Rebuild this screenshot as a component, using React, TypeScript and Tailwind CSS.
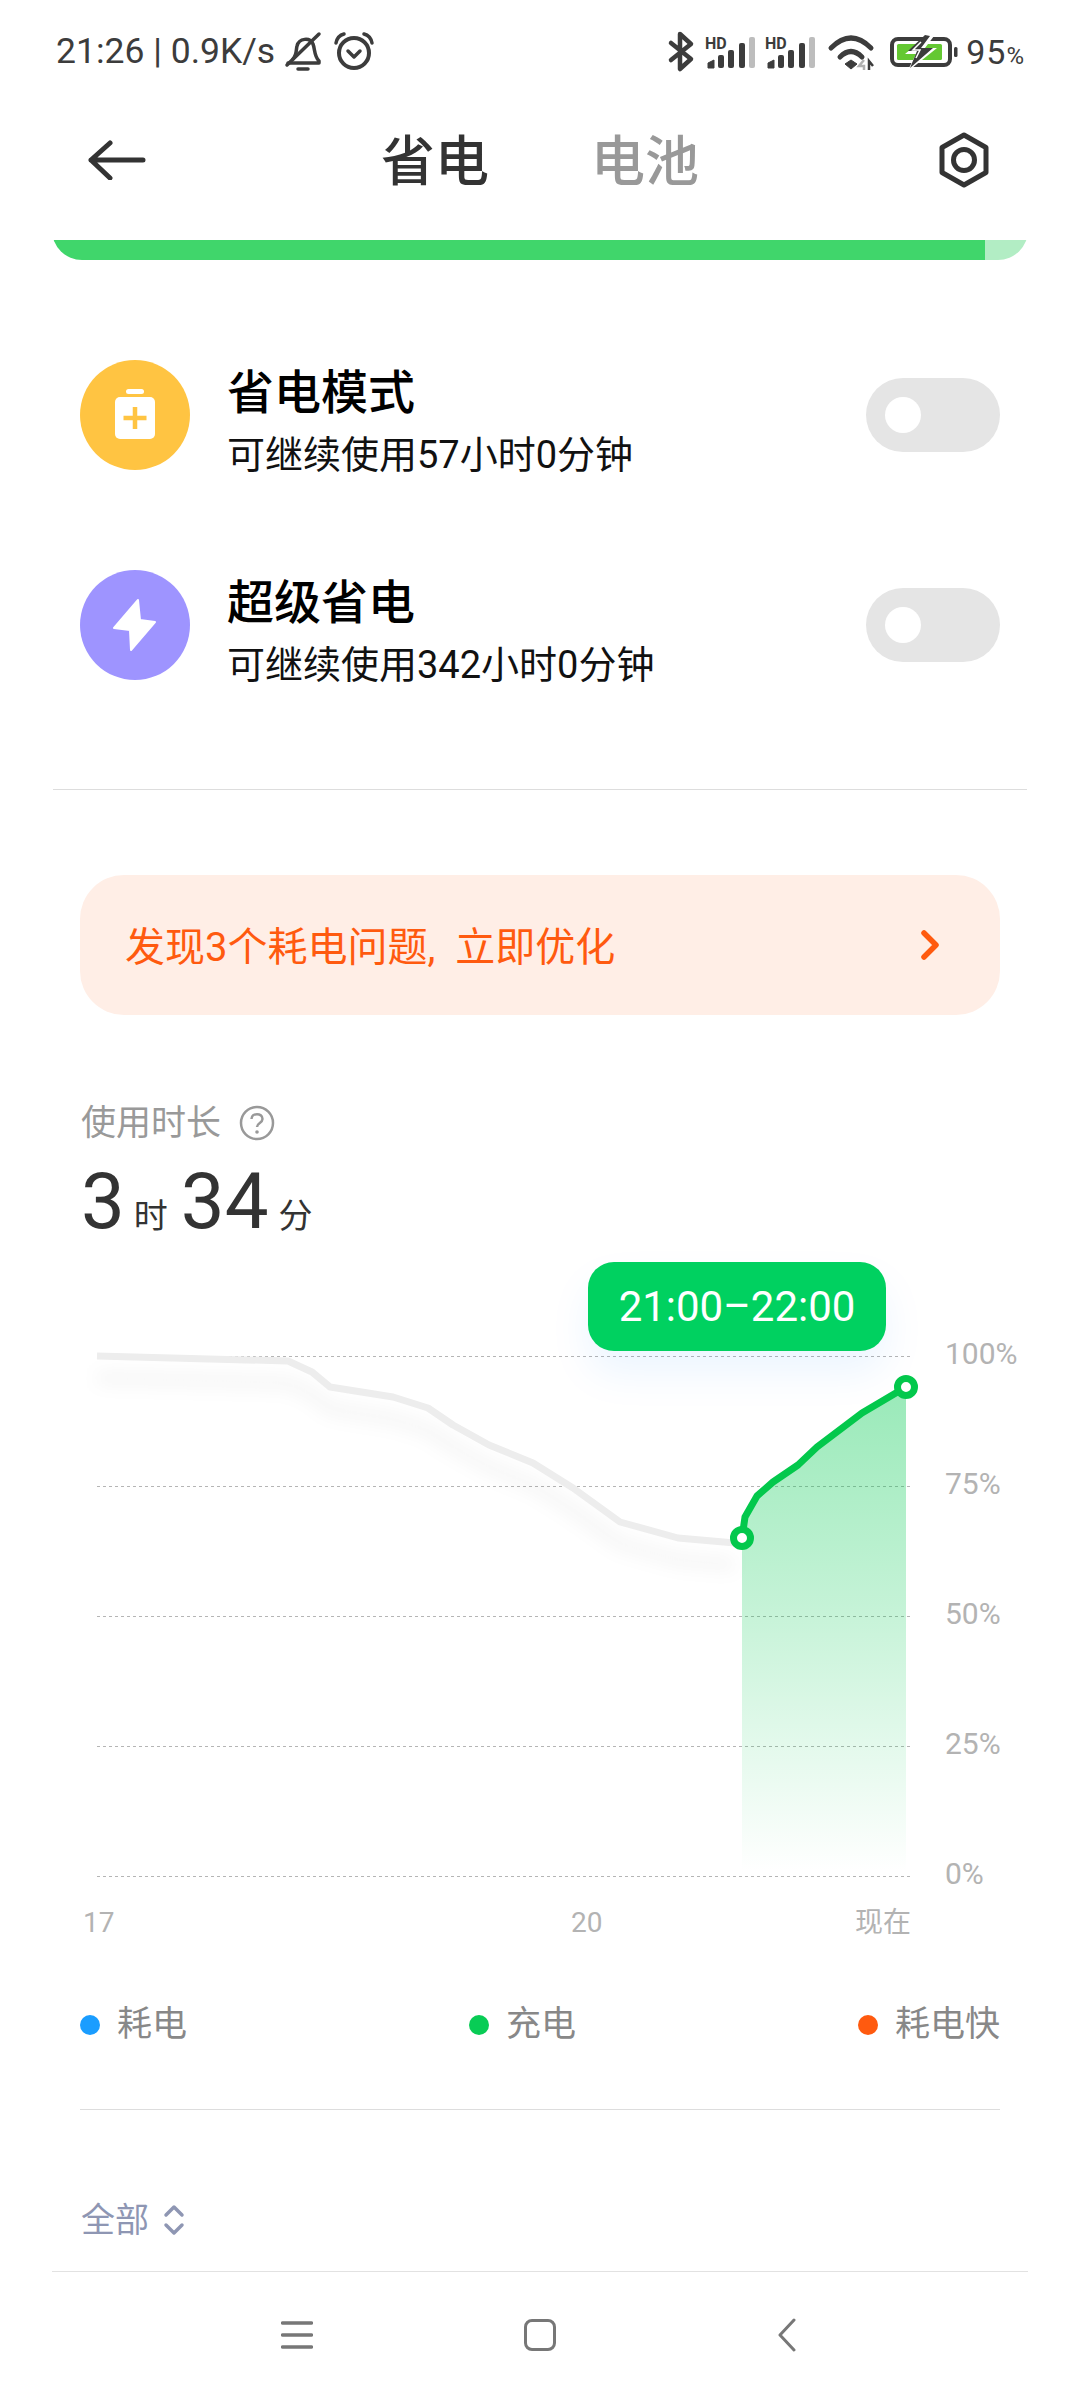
import React from "react";

const gray = "M97 1356 L288 1361 L312 1372 L330 1387 L393 1397 L428 1408 L453 1425 L489 1445 L533 1463 L573 1488 L620 1522 L678 1538 L735 1543";
const green = "M742 1538 L745 1517 L757 1496 L773 1482 L798 1465 L817 1447 L862 1413 L906 1387";

function Signal({ x }: { x: number }) {
  return (
    <g>
      <text x={x - 3} y={48.5} fontSize="16" fontWeight="700" fill="#3c3c3c" fontFamily="Roboto, sans-serif">HD</text>
      <path d={`M${x} 68 L${x} 63 L${x + 6} 60 L${x + 6} 68 Z`} fill="#3c3c3c" stroke="#3c3c3c" strokeWidth="1" strokeLinejoin="round" />
      <rect x={x + 10} y={55} width="6" height="13" rx="2" fill="#3c3c3c" />
      <rect x={x + 20} y={50} width="6" height="18" rx="2" fill="#3c3c3c" />
      <rect x={x + 31} y={43} width="6" height="25" rx="2" fill="#3c3c3c" />
      <rect x={x + 41} y={37} width="6" height="31" rx="2" fill="#bdbdbd" />
    </g>
  );
}

function StatusIcons() {
  return (
    <svg width="300" height="104" viewBox="665 0 300 104" className="shrink-0">
      <path d="M672 43 L692 59 L681 69 L681 34 L692 44 L672 60" fill="none" stroke="#3c3c3c" strokeWidth="4.5" strokeLinejoin="round" strokeLinecap="round" />
      <Signal x={709} />
      <Signal x={769} />
      <path d="M832 48 Q852 28 872 48" fill="none" stroke="#3c3c3c" strokeWidth="5" strokeLinecap="round" />
      <path d="M841 57 Q852 46 863 57" fill="none" stroke="#3c3c3c" strokeWidth="5" strokeLinecap="round" />
      <path d="M846 64 L852 60 L858 64 L852 69 Z" fill="#3c3c3c" stroke="#3c3c3c" strokeWidth="1" />
      <path d="M865 60 L860 66 L865 66 L865 70" fill="none" stroke="#b0b0b0" strokeWidth="2.5" />
      <path d="M870 70 L870 61 L874 66" fill="none" stroke="#3c3c3c" strokeWidth="2.5" />
      <rect x="893" y="39" width="58" height="26" rx="6" fill="none" stroke="#3c3c3c" strokeWidth="4" />
      <rect x="898" y="44" width="45" height="16" rx="1.5" fill="#64c832" />
      <path d="M932 32 L906 54 L917 54 L908 72 L938 48 L926 48 L938 32 Z" fill="#ffffff" />
      <path d="M926 35 L909 51 L918 51 L911 68 L934 48 L922 48 L931 36 Z" fill="#3c3c3c" />
      <path d="M922 42 L914 50 L921 50 L917 58" fill="none" stroke="#ffffff" strokeWidth="1.5" />
      <rect x="955" y="47" width="3.5" height="10" rx="1.5" fill="#3c3c3c" />
    </svg>
  );
}

export default function App() {
  return (
    <div className="w-[1080px] h-[2400px] bg-white overflow-hidden flex flex-col font-['Roboto','Noto_Sans_CJK_SC',sans-serif]">
      {/* status bar */}
      <div className="h-[104px] flex items-center pl-[56px] text-[#3c3c3c]">
        <span className="text-[35.5px] leading-none whitespace-nowrap w-[228px]">21:26 | 0.9K/s</span>
        <svg width="38" height="42" viewBox="283 32 38 42" className="shrink-0">
          <path d="M292 60 C296 56 295 50 296 47 C298 39 309 38 312 45 C314 50 313 57 318 62 L318 64 L287 64" fill="none" stroke="#3c3c3c" strokeWidth="3.5" strokeLinejoin="round" strokeLinecap="round" />
          <path d="M286 66 L318 35" stroke="#3c3c3c" strokeWidth="3.5" strokeLinecap="round" />
          <path d="M297 70 L307 70" stroke="#3c3c3c" strokeWidth="3.5" strokeLinecap="round" />
        </svg>
        <svg width="42" height="42" viewBox="332 32 42 42" className="ml-[11px] shrink-0">
          <circle cx="353" cy="54" r="15" fill="none" stroke="#3c3c3c" strokeWidth="4" />
          <path d="M347 52 L353 58 L359 52" fill="none" stroke="#3c3c3c" strokeWidth="3.5" strokeLinecap="round" strokeLinejoin="round" />
          <path d="M335 44 C336 39 339 36 343 35 M363 35 C367 36 370 39 371 44" fill="none" stroke="#3c3c3c" strokeWidth="3.5" strokeLinecap="round" />
        </svg>
        <div className="ml-auto flex items-center pr-[55px]">
          <StatusIcons />
          <span className="text-[34px] leading-none ml-[2px] tracking-[1px]">95<span className="text-[24px]">%</span></span>
        </div>
      </div>

      {/* header */}
      <div className="h-[112px] flex items-center pl-[88px]">
        <svg width="58" height="40" viewBox="88 140 58 40" className="shrink-0">
          <path d="M143 160 L91 160 M110 143 L91 160 L110 178" fill="none" stroke="#333333" strokeWidth="5" strokeLinecap="round" strokeLinejoin="round" />
        </svg>
        <span className="ml-[235px] mt-[5px] text-[54px] leading-none font-medium text-[#333333]">省电</span>
        <span className="ml-[102px] mt-[5px] text-[54px] leading-none font-medium text-[#999999]">电池</span>
        <svg width="56" height="60" viewBox="937 130 56 60" className="ml-[237px] shrink-0">
          <path d="M965 135 L987 147.5 L987 172.5 L965 185 L943 172.5 L943 147.5 Z" fill="none" stroke="#333333" strokeWidth="5" strokeLinejoin="round" />
          <circle cx="965" cy="160" r="10.5" fill="none" stroke="#333333" strokeWidth="5" />
        </svg>
      </div>

      {/* progress bar, cut at the top */}
      <div className="mt-[24px] mx-[52px] h-[20px] overflow-hidden shrink-0">
        <div className="-mt-[40px] h-[60px] rounded-[40px] overflow-hidden flex">
          <div className="flex-1 bg-[#40d66b]" />
          <div className="w-[43px] bg-[#b2edc4]" />
        </div>
      </div>

      {/* mode rows */}
      <div className="mt-[100px] flex flex-col gap-[100px] px-[80px]">
        <div className="flex items-center h-[110px]">
          <div className="w-[110px] h-[110px] rounded-full bg-[#ffc442] flex items-center justify-center shrink-0">
            <svg width="44" height="54" viewBox="113 389 44 54">
              <rect x="126" y="390" width="18" height="5" rx="2.5" fill="#ffffff" />
              <rect x="115" y="398" width="40" height="42" rx="5" fill="#ffffff" />
              <path d="M123.5 419 L146.5 419 M135 408 L135 430" stroke="#ffc442" strokeWidth="4.5" />
            </svg>
          </div>
          <div className="ml-[37px] mt-[12px] flex-1">
            <div className="text-[47px] leading-[62px] font-medium text-black">省电模式</div>
            <div className="mt-[6px] text-[38px] leading-[50px] text-[#111111]">可继续使用57小时0分钟</div>
          </div>
          <div className="w-[134px] h-[74px] rounded-full bg-[#e5e5e5] flex items-center pl-[19px] shrink-0">
            <div className="w-[36px] h-[36px] rounded-full bg-white" />
          </div>
        </div>
        <div className="flex items-center h-[110px]">
          <div className="w-[110px] h-[110px] rounded-full bg-[#9e94ff] flex items-center justify-center shrink-0">
            <svg width="46" height="56" viewBox="112 597 46 56">
              <path d="M138 600 L114 628 L130 630 L131 650 L155 622 L140 620 Z" fill="#ffffff" stroke="#ffffff" strokeWidth="2" strokeLinejoin="round" />
            </svg>
          </div>
          <div className="ml-[37px] mt-[12px] flex-1">
            <div className="text-[47px] leading-[62px] font-medium text-black">超级省电</div>
            <div className="mt-[6px] text-[38px] leading-[50px] text-[#111111]">可继续使用342小时0分钟</div>
          </div>
          <div className="w-[134px] h-[74px] rounded-full bg-[#e5e5e5] flex items-center pl-[19px] shrink-0">
            <div className="w-[36px] h-[36px] rounded-full bg-white" />
          </div>
        </div>
      </div>

      <div className="mt-[109px] mx-[53px] h-px bg-[#dddddd] shrink-0" />

      {/* banner */}
      <div className="mt-[85px] mx-[80px] h-[140px] rounded-[44px] bg-[#ffeee6] flex items-center pl-[45px] pr-[58px] shrink-0">
        <span className="flex-1 mt-[6px] text-[40px] leading-none text-[#ff5a0f] [word-spacing:10px]">发现3个耗电问题, 立即优化</span>
        <svg width="22" height="30" viewBox="0 0 22 30">
          <path d="M4 3 L16 15 L4 27" fill="none" stroke="#ff5a0f" strokeWidth="5.5" strokeLinecap="round" strokeLinejoin="round" />
        </svg>
      </div>

      {/* usage */}
      <div className="mt-[89px] pl-[81px] flex items-center h-[38px] shrink-0">
        <span className="text-[35px] leading-none text-[#999999]">使用时长</span>
        <svg width="36" height="36" viewBox="0 0 36 36" className="ml-[18px]">
          <circle cx="18" cy="18" r="16" fill="none" stroke="#999999" strokeWidth="2.5" />
          <path d="M12.5 14 C12.5 7.5 23.5 7.5 23.5 14 C23.5 18 18 18 18 22" fill="none" stroke="#999999" strokeWidth="2.5" />
          <circle cx="18" cy="27" r="1.8" fill="#999999" />
        </svg>
      </div>
      <div className="mt-[15px] pl-[81px] flex items-baseline text-[#333333] h-[90px] shrink-0">
        <span className="text-[78px] leading-[90px]">3</span>
        <span className="ml-[9px] text-[34px] leading-none">时</span>
        <span className="ml-[13px] text-[78px] leading-[90px]">34</span>
        <span className="ml-[10px] text-[34px] leading-none">分</span>
      </div>

      {/* chart */}
      <div className="mt-[13px] relative flex h-[630px] shrink-0">
        <svg width="930" height="630" viewBox="0 1260 930 630" className="shrink-0">
          <defs>
            <linearGradient id="area" x1="0" y1="1387" x2="0" y2="1872" gradientUnits="userSpaceOnUse">
              <stop offset="0" stopColor="#00c94f" stopOpacity="0.4" />
              <stop offset="0.45" stopColor="#00c94f" stopOpacity="0.23" />
              <stop offset="1" stopColor="#00c94f" stopOpacity="0" />
            </linearGradient>
            <filter id="soft" x="-10%" y="-30%" width="120%" height="160%">
              <feGaussianBlur stdDeviation="9" />
            </filter>
          </defs>
          {[1356, 1486, 1616, 1746, 1876].map((y) => (
            <line key={y} x1="97" x2="913" y1={y + 0.5} y2={y + 0.5} stroke="#b5b5b5" strokeWidth="1" strokeDasharray="3 3" />
          ))}
          <path d={gray} transform="translate(0 22)" fill="none" stroke="#000000" strokeOpacity="0.05" strokeWidth="10" filter="url(#soft)" />
          <path d={gray} fill="none" stroke="#ededed" strokeWidth="7" strokeLinejoin="round" />
          <path d={`${green} L906 1872 L742 1872 Z`} fill="url(#area)" />
          <path d={green} fill="none" stroke="#03c84c" strokeWidth="7" strokeLinejoin="round" />
          <circle cx="742" cy="1538" r="8.5" fill="#ffffff" stroke="#03c84c" strokeWidth="7" />
          <circle cx="906" cy="1387" r="8.5" fill="#ffffff" stroke="#03c84c" strokeWidth="7" />
        </svg>
        <div className="ml-[15px] pt-[31px] flex flex-col text-[30px] text-[#b3b3b3]">
          {["100%", "75%", "50%", "25%", "0%"].map((t) => (
            <span key={t} className="h-[130px] shrink-0 leading-[126px]">{t}</span>
          ))}
        </div>
        <div className="absolute left-[588px] top-[2px] w-[298px] h-[89px] rounded-[26px] bg-[#00d160] flex items-center justify-center text-white text-[42px] leading-none shadow-[0_22px_40px_rgba(0,130,255,0.08)]">
          21:00–22:00
        </div>
      </div>

      {/* x axis */}
      <div className="mt-[15px] pl-[83px] flex text-[28px] leading-[36px] text-[#b3b3b3] shrink-0">
        <span className="w-[488px]">17</span>
        <span className="w-[284px]">20</span>
        <span>现在</span>
      </div>

      {/* legend */}
      <div className="mt-[62px] px-[80px] flex justify-between text-[35px] leading-[44px] text-[#888888] shrink-0">
        <div className="flex items-center">
          <span className="w-[20px] h-[20px] rounded-full bg-[#1a9dff]" />
          <span className="ml-[17px]">耗电</span>
        </div>
        <div className="flex items-center">
          <span className="w-[20px] h-[20px] rounded-full bg-[#08cc55]" />
          <span className="ml-[17px]">充电</span>
        </div>
        <div className="flex items-center">
          <span className="w-[20px] h-[20px] rounded-full bg-[#ff5a0f]" />
          <span className="ml-[17px]">耗电快</span>
        </div>
      </div>

      <div className="mt-[62px] mx-[80px] h-px bg-[#dddddd] shrink-0" />

      {/* filter */}
      <div className="mt-[90px] pl-[81px] flex items-center h-[40px] shrink-0">
        <span className="text-[34px] leading-none text-[#8e96b3]">全部</span>
        <svg width="22" height="32" viewBox="0 0 22 32" className="ml-[14px]">
          <path d="M3 11 L11 3 L19 11 M3 21 L11 29 L19 21" fill="none" stroke="#8e96b3" strokeWidth="3.5" strokeLinecap="round" strokeLinejoin="round" />
        </svg>
      </div>

      <div className="mt-[31px] mx-[52px] h-px bg-[#e2e2e2] shrink-0" />

      {/* nav */}
      <div className="mt-[46px] pl-[281px] flex items-center h-[34px] shrink-0">
        <svg width="32" height="30" viewBox="0 0 32 30">
          <path d="M1.5 3 H30.5 M1.5 15 H30.5 M1.5 27 H30.5" stroke="#777777" strokeWidth="3.5" strokeLinecap="round" />
        </svg>
        <div className="ml-[211px] w-[32px] h-[32px] rounded-[8px] border-[3px] border-[#777777]" />
        <svg width="20" height="34" viewBox="0 0 20 34" className="ml-[221px]">
          <path d="M17 2 L3 17 L17 32" fill="none" stroke="#777777" strokeWidth="3" strokeLinecap="round" strokeLinejoin="round" />
        </svg>
      </div>
    </div>
  );
}
